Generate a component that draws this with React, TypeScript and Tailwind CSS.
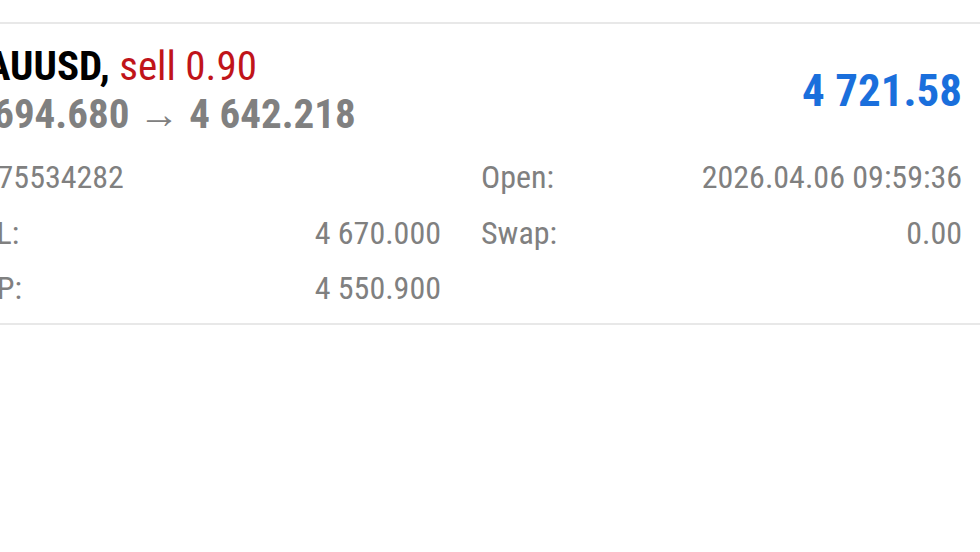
export default function App() {
  const rows: [string, string, string, string][] = [
    ["#75534282", "", "Open:", "2026.04.06 09:59:36"],
    ["SL:", "4 670.000", "Swap:", "0.00"],
    ["TP:", "4 550.900", "", ""],
  ];
  return (
    <div className="w-[980px] h-[552px] overflow-hidden bg-white font-['Roboto_Condensed',Roboto,sans-serif]">
      <div className="h-[22px]" />
      <div className="border-t-2 border-b-2 border-[#e8e8e8]">
        <div className="-ml-[20px] w-[1000px] pr-[18px]">
          <div className="-ml-[17px] flex items-center justify-between pt-[18px]">
            <div className="flex flex-col">
              <div className="text-[41px] leading-[48px] whitespace-nowrap">
                <span className="font-bold text-black">XAUUSD,</span>{" "}
                <span className="text-[#c0141a]">sell 0.90</span>
              </div>
              <div className="text-[41px] leading-[48px] font-bold text-[#808080] whitespace-nowrap">
                4 694.680 <span className="font-normal">→</span> 4 642.218
              </div>
            </div>
            <div className="text-[45px] font-bold text-[#1a6fdc] leading-none">4 721.58</div>
          </div>
          <div className="grid grid-cols-[461px_1fr] gap-x-[40px] pt-[12px] pb-[6px] text-[32px] leading-[55.5px] text-[#808080]">
            {rows.map((r, i) => (
              <div key={i} className="contents">
                <div className="flex justify-between">
                  <span>{r[0]}</span>
                  <span>{r[1]}</span>
                </div>
                <div className="flex justify-between">
                  <span>{r[2]}</span>
                  <span>{r[3]}</span>
                </div>
              </div>
            ))}
          </div>
        </div>
      </div>
    </div>
  );
}
